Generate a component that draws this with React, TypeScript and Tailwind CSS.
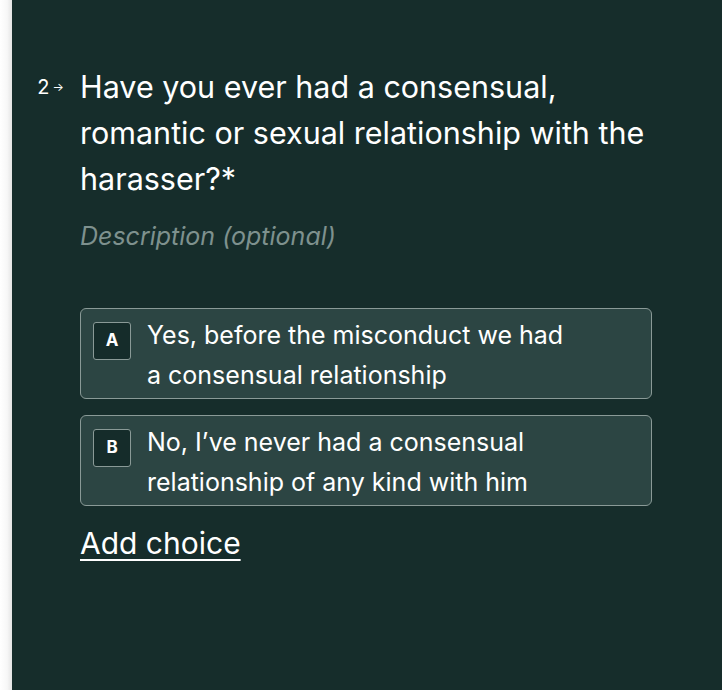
import React from "react";

const font = { fontFamily: "Inter, 'Noto Sans', 'Liberation Sans', sans-serif" };

function Choice({ k, children }: { k: string; children: React.ReactNode }) {
  return (
    <div className="flex items-start rounded-[6px] border border-[#8a9a97] bg-[#2c4543] pl-[12px] pr-3 pt-[6px] pb-[3px]">
      <div className="mt-[7px] flex h-[38px] w-[38px] shrink-0 items-center justify-center rounded-[3px] border border-[#8a9a97] bg-[#152c2a] text-[17px] font-bold text-white">
        {k}
      </div>
      <div className="ml-[16px] max-w-[432px] text-[25px] leading-[40px] text-white">{children}</div>
    </div>
  );
}

export default function App() {
  return (
    <div className="flex h-[690px] w-[722px] overflow-hidden bg-white" style={font}>
      <div className="w-[12px] shrink-0 bg-[linear-gradient(to_right,#ffffff_0%,#f7f7f7_60%,#e4e4e4_100%)]" />
      <div className="flex-1 bg-[#162d2b] pt-[64px]">
        <div className="flex">
          <div className="flex w-[68px] shrink-0 justify-end pr-[16px] pt-[10px]">
            <span className="text-[20px] leading-[26px] text-white">2</span>
            <span className="ml-[3px] text-[12px] leading-[26px] text-white">→</span>
          </div>
          <div className="w-[572px]">
            <div className="text-[30.5px] leading-[46px] text-white">
              Have you ever had a consensual, romantic or sexual relationship with the harasser?*
            </div>
            <div className="mt-[18px] text-[25px] italic leading-[32px] text-[#7e918e]">Description (optional)</div>
            <div className="mt-[56px] flex flex-col gap-[16px]">
              <Choice k="A">Yes, before the misconduct we had a consensual relationship</Choice>
              <Choice k="B">No, I’ve never had a consensual relationship of any kind with him</Choice>
            </div>
            <div className="mt-[17px] text-[30px] leading-[40px] text-white underline underline-offset-[5px] decoration-[2px]">
              Add choice
            </div>
          </div>
        </div>
      </div>
    </div>
  );
}
